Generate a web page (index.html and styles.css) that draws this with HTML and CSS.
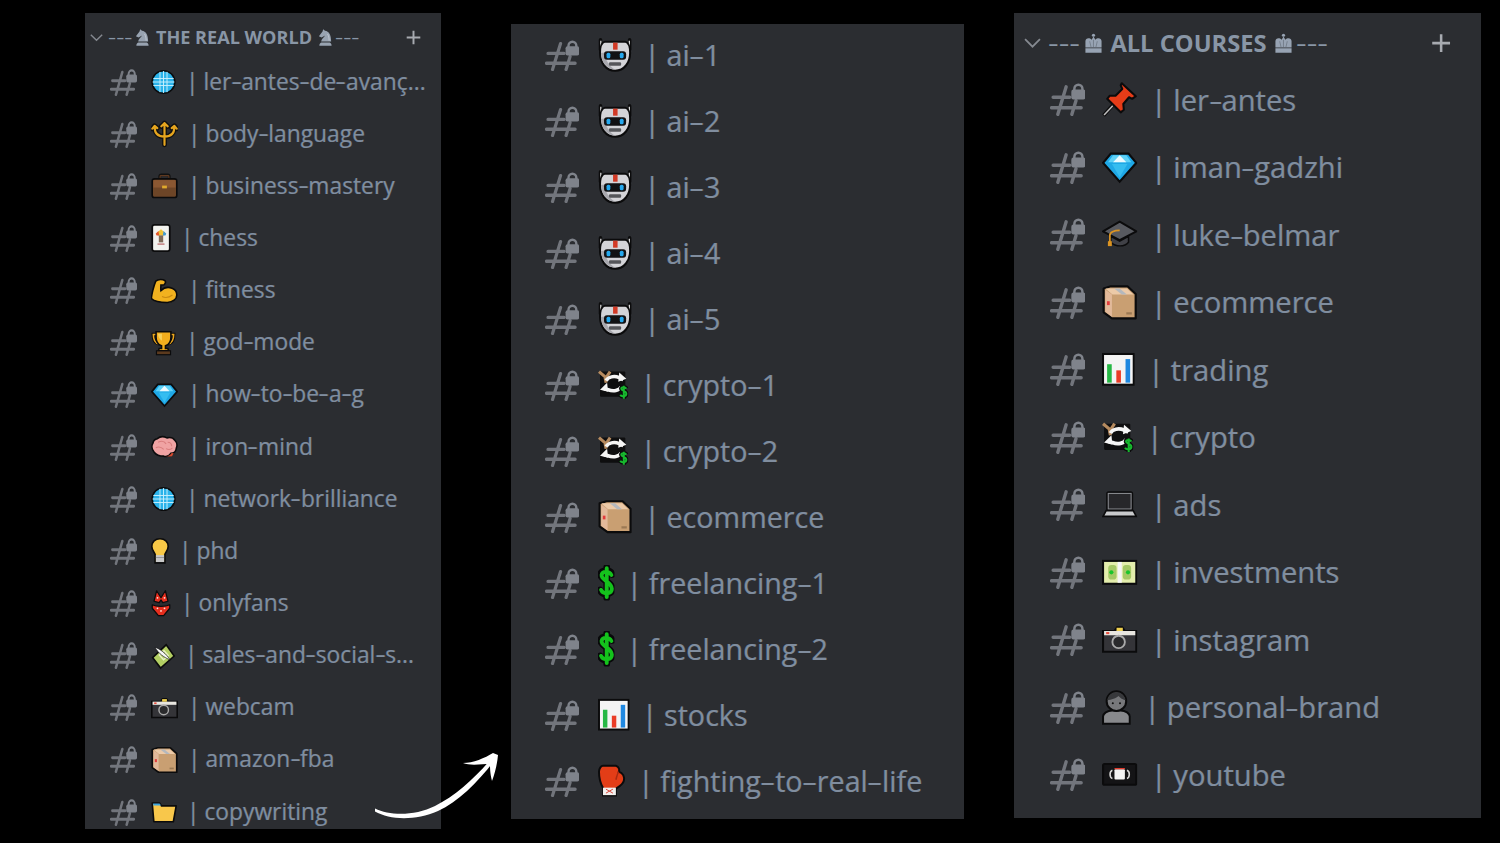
FILE: index.html
```html
<!DOCTYPE html>
<html lang="pt">
<head>
<meta charset="utf-8">
<title>Canais</title>
<link rel="stylesheet" href="styles.css">
</head>
<body>
<svg class="defs" xmlns="http://www.w3.org/2000/svg">
<symbol id="hash" viewBox="0 0 34 30" preserveAspectRatio="none"><g fill="none" stroke="#72757c" stroke-width="3.200" stroke-linecap="round"><path d="M3 13H19M1.500 22.500H30M15.500 3.500L7.500 28.500M25 16L21 28.500"/></g><rect x="20.500" y="6" width="13.500" height="9" rx="2" fill="#7f838b"/><path d="M23.400 7V5.500a3.900 3.900 0 0 1 7.800 0V7" fill="none" stroke="#7f838b" stroke-width="2.400"/></symbol>
<symbol id="chevron" viewBox="0 0 16 10"><path d="M1 1.500L8 8.500L15 1.500" fill="none" stroke="#858990" stroke-width="1.700"/></symbol>
<symbol id="plus" viewBox="0 0 20 20"><path d="M10 2V18M2 10H18" stroke="#a7aab0" stroke-width="2.300"/></symbol>
<symbol id="knight" viewBox="0 0 16 18"><path fill="#98a3b1" d="M1.500 18c0-1.800.8-3 2-3.500h9.500c1.200.5 2 1.700 2 3.500zM3.500 13.500c.3-2.800 3-4.200 4.300-6.600L4 9 1 7.500 5 2.500 5.700 0l2 1.500C12 2 14.500 6 14.500 13.500z"/><path d="M10.500 5c1.300 2 1.800 5 1.800 7.500" fill="none" stroke="#c2c9d2" stroke-width="1"/></symbol>
<symbol id="crown" viewBox="0 0 20 20"><path fill="#97a3b3" d="M1.500 14.500V8C1.500 5 5.500 3.700 8 6.500L10 3l2 3.500C14.500 3.700 18.500 5 18.500 8v6.500z"/><path fill="#97a3b3" d="M1.500 15.500h17V20h-17z"/><circle cx="10" cy="1.700" r="1.700" fill="#97a3b3"/><path d="M10 6.500v8M6 8l1.500 6.500M14 8l-1.500 6.500" fill="none" stroke="#5c6570" stroke-width=".6"/></symbol>

<symbol id="globe" viewBox="0 0 32 32"><circle cx="16" cy="16" r="14.500" fill="#2ab3ea" stroke="#0b0b0c" stroke-width="2"/><path d="M3 11.500H29M2 16H30M3 20.500H29M11.500 3V29M16 2V30M20.500 3V29" stroke="#c9f0fd" stroke-width="1.200"/></symbol>
<symbol id="trident" viewBox="1 3 30 28"><g fill="none" stroke="#111" stroke-width="5.500" stroke-linecap="round" stroke-linejoin="round"><path d="M16 5V29M5 9c0 8 5 11 11 11s11-3 11-11M12.500 8.500L16 5l3.500 3.500M2.500 11L5 8l3 2.500M24 10.500L27 8l2.500 3"/></g><g fill="none" stroke="#e6a51e" stroke-width="2.400" stroke-linecap="round" stroke-linejoin="round"><path d="M16 5V29M5 9c0 8 5 11 11 11s11-3 11-11M12.500 8.500L16 5l3.500 3.500M2.500 11L5 8l3 2.500M24 10.500L27 8l2.500 3"/></g></symbol>
<symbol id="case" viewBox="0 0 34 32"><rect x="11" y="2" width="12" height="8" rx="2" fill="none" stroke="#111" stroke-width="3.500"/><rect x="11.500" y="3" width="11" height="6" rx="1" fill="none" stroke="#5f3920" stroke-width="1.500"/><rect x="1.500" y="7" width="31" height="23.500" rx="3" fill="#6d4527" stroke="#0b0b0c" stroke-width="2"/><path d="M3 8.500h28v9.500H3z" fill="#8a5732"/><rect x="14" y="15.500" width="6" height="3.500" fill="#e0a92d"/></symbol>
<symbol id="card" viewBox="0 0 22 32"><rect x="1" y="1" width="20" height="30" rx="2.500" fill="#f2f2ee" stroke="#0b0b0c" stroke-width="2"/><path d="M5 11L11 6l6 5-3 2H8z" fill="#f0c338"/><path d="M5 11L8 8l1 5H6z" fill="#e2542d"/><path d="M17 11l-3-3-1 5h3z" fill="#3e9ad6"/><rect x="8.500" y="13" width="5" height="8" fill="#7f6a58"/><path d="M7 22h8v2H7z" fill="#c98f8f"/></symbol>
<symbol id="bicep" viewBox="0 0 34 32"><path d="M6 3.500C9 1 15 1 17.500 3c1.500 1.500.5 4-1 5-1.500.5-3 .5-4 .5 0 3-.5 5 0 7 4-4 10-4.500 14-3 4 1.500 6 5 6 8.500 0 5-5 9.500-12 9.500-8 0-17-2-20-5C.500 22 3.500 9 6 3.500z" fill="#f2b21f" stroke="#0b0b0c" stroke-width="2"/><path d="M14 23c4 2 9 1 13-2" fill="none" stroke="#c98a12" stroke-width="1.500"/></symbol>
<symbol id="trophy" viewBox="0 0 32 32"><path d="M8 5H3c0 7 2 11 7 12M24 5h5c0 7-2 11-7 12" fill="none" stroke="#0b0b0c" stroke-width="4.500"/><path d="M8 5H3c0 7 2 11 7 12M24 5h5c0 7-2 11-7 12" fill="none" stroke="#eca61d" stroke-width="2"/><path d="M6.500 1.500h19V9c0 6-4 9.500-7 10.500V23h3l1 3H9.500l1-3h3v-3.500c-3-1-7-4.500-7-10.500z" fill="#f3ae1d" stroke="#0b0b0c" stroke-width="2"/><path d="M9 4h5v9c-3-2-5-5-5-9z" fill="#f8d05a"/><rect x="7" y="26" width="18" height="5" fill="#5b3a1e" stroke="#0b0b0c" stroke-width="1.500"/></symbol>
<symbol id="gem" viewBox="0 0 32 28"><path d="M8 1.500h16L31 10 16 27 1 10z" fill="#1fa8e6" stroke="#0b0b0c" stroke-width="2"/><path d="M10 3h12l4.500 6.500h-21z" fill="#5fd2f7"/><path d="M16 3l6 6.500H10z" fill="#eafaff"/><path d="M9 11h14l-7 12z" fill="#35bdf0"/></symbol>
<symbol id="brain" viewBox="0 0 34 28"><path d="M8 3.500C12 0 17 1 20 2.500c4-1 8 0 10 3 2.500 2.500 3.500 6 2 9.500-.5 5-4 7-7 7-2 3-6 4.500-9 3.500-5 0-9-1-12-5C1 17 .5 12 2.500 9 3 6 5 4 8 3.500z" fill="#f0a3a3" stroke="#0b0b0c" stroke-width="2"/><path d="M9 8c4-2 8-1 10 2M6 15c4-2 7-1 10 2M21 8c3 0 5 2 5 5M19 16c3 2 6 1 8-1" fill="none" stroke="#d97e7e" stroke-width="1.400"/><path d="M19 26c2 0 6-2 6.500-4l3-.5-2 4z" fill="#d84a2e"/></symbol>
<symbol id="bulb" viewBox="0 0 22 32"><path d="M11 1c6 0 10 4 10 9.500 0 4-2.500 6.500-4 9.500v10.500H5V20c-1.500-3-4-5.500-4-9.500C1 5 5 1 11 1z" fill="#f8c846" stroke="#0b0b0c" stroke-width="2"/><path d="M6 21h10v8.500H6z" fill="#c8c8c8"/><path d="M6 24h10" stroke="#8d8d8d" stroke-width="1"/></symbol>
<symbol id="bikini" viewBox="0 0 22 32"><path d="M3 14L6 2l5 8 5-8 3 12-6 1.500-2-3-2 3z" fill="#e62e1e" stroke="#0b0b0c" stroke-width="1.400" stroke-linejoin="round"/><path d="M1 18c5 2.500 15 2.500 20 0v4l-7 8.500H8L1 22z" fill="#e62e1e" stroke="#0b0b0c" stroke-width="1.400" stroke-linejoin="round"/><g fill="#fbe6df"><circle cx="7" cy="10" r="1"/><circle cx="15" cy="10" r="1"/><circle cx="7" cy="22" r="1"/><circle cx="11" cy="25" r="1"/><circle cx="15" cy="22" r="1"/></g></symbol>
<symbol id="money" viewBox="0 0 30 32"><path d="M2 18L19 2l10 14-17 15z" fill="#b3cf63" stroke="#0b0b0c" stroke-width="2"/><rect x="12" y="11" width="8" height="8" transform="rotate(-42 16 15)" fill="none" stroke="#eaf2c6" stroke-width="1.700"/><path d="M5 5c6 2 14 8 19 16-7-3-15-8-19-16z" fill="#f6f6f6" stroke="#0b0b0c" stroke-width=".8"/></symbol>
<symbol id="camera" viewBox="0 0 34 26"><path d="M1 5h11l2.500-3.500h5L22 5h11v20H1z" fill="#343438" stroke="#0b0b0c" stroke-width="2"/><path d="M2 5h30v4H2z" fill="#e8e6e0"/><rect x="4" y="6" width="3" height="2" fill="#e84c3d"/><path d="M14 1.800h6V5h-6z" fill="#efd04f"/><circle cx="16" cy="15.500" r="6" fill="#2a2a2c" stroke="#a9a9a9" stroke-width="1.800"/></symbol>
<symbol id="box" viewBox="0 0 32 32"><path d="M1.500 3.500L8 1.500h15l7.500 7V30.500H9L1.500 25z" fill="#c99f72" stroke="#0b0b0c" stroke-width="2" stroke-linejoin="round"/><path d="M3 4.500L9 9V29L3 24.500z" fill="#e2b99a"/><path d="M3 3.500h19.500l6 5.500H9.500z" fill="#eccaa8"/><path d="M11 3.500L18 9h4.500L16 3.500z" fill="#b4b8bd"/><rect x="4.500" y="15" width="2.500" height="3.500" fill="#e23c3c"/><path d="M22 25h5v2h-5z" fill="#9b7954"/></symbol>
<symbol id="folder" viewBox="0 0 32 28"><path d="M1.500 3h9l2.500 3.500H31L27.500 26H3.500z" fill="#f8c74b" stroke="#0b0b0c" stroke-width="2" stroke-linejoin="round"/><path d="M2.500 3.500h8l2 2.500H3z" fill="#3ea3dc"/></symbol>
<symbol id="robot" viewBox="0 0 34 34"><path d="M2.500 2v10M31.500 2v10" stroke="#0b0b0c" stroke-width="3.500" stroke-linecap="round"/><path d="M2.800 3v9M31.200 3v9" stroke="#d8d8d8" stroke-width="1.300"/><path d="M7 4h20c4 1 5 6 5 11 0 10-6 18-15 18S2 25 2 15C2 10 3 5 7 4z" fill="#d4d4d8" stroke="#0b0b0c" stroke-width="2"/><path d="M3 15c0 8 5 16 14 17C11 28 7 22 7 15z" fill="#a8a8ae"/><rect x="15" y="5" width="4.500" height="7" fill="#d23a26"/><rect x="6" y="13.500" width="22" height="8.500" rx="3" fill="#121214"/><rect x="8.500" y="15" width="3.800" height="5.500" rx="1.500" fill="#25a8ee"/><rect x="21.700" y="15" width="3.800" height="5.500" rx="1.500" fill="#25a8ee"/><rect x="11" y="24.500" width="12" height="3.500" rx="1" fill="#55565a"/></symbol>
<symbol id="crypto" viewBox="0 0 30 32"><rect x="2" y="3" width="25" height="25" rx="1" fill="#0e0e0f"/><path d="M1 3l7 6 4-6M7 9l1 5" fill="none" stroke="#b58a5f" stroke-width="3"/><path d="M8 12c2-4 8-5 13-3l4 2" fill="none" stroke="#f5f5f5" stroke-width="3.500"/><path d="M21 4l7 6-8 3z" fill="#f5f5f5"/><path d="M23 18c-2 4-8 5-13 3l-4-1" fill="none" stroke="#f5f5f5" stroke-width="3.500"/><path d="M9 14l-7 7 8 2z" fill="#f5f5f5"/><path d="M28 20c-1-2-5-2-5 0s5 2 5 5-5 3-6 1M25.500 17v13" fill="none" stroke="#0b0b0c" stroke-width="4.500"/><path d="M28 20c-1-2-5-2-5 0s5 2 5 5-5 3-6 1M25.500 17v13" fill="none" stroke="#17b82e" stroke-width="2"/></symbol>
<symbol id="dollar" viewBox="0 0 16 34"><path d="M14 9C12 4 3 4 2.500 9 2 15 14 16 14 23c0 6-10 7-12 1M8.500 2V32" fill="none" stroke="#08090a" stroke-width="6.500" stroke-linecap="round"/><path d="M13 9.500C11 5.500 4 5.500 3.500 9.500 3 15 13.500 16 13.500 23c0 5-8.500 6-10.500 1M8.500 3V31" fill="none" stroke="#14c21c" stroke-width="3.800" stroke-linecap="round"/></symbol>
<symbol id="chart" viewBox="0 0 32 32"><rect x="1" y="1" width="30" height="30" fill="#f4f4f4" stroke="#0b0b0c" stroke-width="2"/><rect x="5" y="11" width="4.500" height="18" fill="#26b845"/><rect x="14" y="17" width="4.500" height="12" fill="#ea3c26"/><rect x="23" y="6" width="4.500" height="23" fill="#1f88e0"/></symbol>
<symbol id="glove" viewBox="0 0 28 32"><path d="M5 1h13c3 1 4 4 3 6 4 1 6 5 5 9-1 4-5 6-8 8v7H5v-8C2 18 1 13 1 7c0-3 2-6 4-6z" fill="#e33d17" stroke="#0b0b0c" stroke-width="2"/><path d="M21 7c-2 2-2 5-3 8" stroke="#a92a10" stroke-width="1.500" fill="none"/><rect x="5" y="23" width="13" height="7.500" fill="#f1f0ee"/><path d="M8 24.500l7 4M15 24.500l-7 4" stroke="#d8473a" stroke-width="1"/></symbol>
<symbol id="pin" viewBox="0 0 34 34"><path d="M1.500 32.500L11 22" stroke="#0b0b0c" stroke-width="3.500"/><path d="M2 32L11 22.500" stroke="#bdbdbd" stroke-width="1.500"/><path d="M19 1.500L32.500 14 29 16.500 26 15 20.500 21.500 21 27 18 29.500 5 16.500 7.500 13.500 13 13.500 19.500 7 18 3.500z" fill="#e63c18" stroke="#0b0b0c" stroke-width="2" stroke-linejoin="round"/></symbol>
<symbol id="cap" viewBox="0 0 36 28"><path d="M18 1L35 11 18 20 1 11z" fill="#585a60" stroke="#0b0b0c" stroke-width="2" stroke-linejoin="round"/><path d="M9 16v6c5 5 14 5 18 0v-6l-9 5z" fill="#404147" stroke="#0b0b0c" stroke-width="1.500"/><path d="M18 10c-6 0-10 2-10 5v7" fill="none" stroke="#dc9422" stroke-width="1.800"/><rect x="6" y="21" width="4" height="5" fill="#dc9422"/></symbol>
<symbol id="laptop" viewBox="0 0 34 26"><rect x="5" y="1.500" width="24" height="17" rx="1.500" fill="#27272a" stroke="#0b0b0c" stroke-width="2"/><rect x="6" y="2.500" width="22" height="15" fill="none" stroke="#8d8f94" stroke-width="1"/><path d="M1 24.500l3-5.500h26l3 5.500z" fill="#c9cacc" stroke="#0b0b0c" stroke-width="1.600"/></symbol>
<symbol id="note" viewBox="0 0 34 24"><rect x="1" y="1" width="32" height="22" fill="#e3edac" stroke="#0b0b0c" stroke-width="2"/><rect x="6" y="5" width="8" height="14" rx="3" fill="#a5c866"/><rect x="20" y="5" width="8" height="14" rx="3" fill="#a5c866"/><rect x="15" y="2" width="4" height="20" fill="#f6f6f6"/><circle cx="9" cy="12" r="2" fill="#1ac52c"/><circle cx="25" cy="12" r="2" fill="#1ac52c"/></symbol>
<symbol id="person" viewBox="0 0 28 34"><path d="M1 33V26c0-3 4-6 9-6h8c5 0 9 3 9 6v7z" fill="#88898c" stroke="#0b0b0c" stroke-width="2"/><circle cx="14" cy="11" r="9.500" fill="#77787b" stroke="#0b0b0c" stroke-width="2"/><path d="M5 10c1-5 5-8 9-8s8 3 9 8c-3 0-6-3-7-4-2 2-7 4-11 4z" fill="#37383b"/><circle cx="10.500" cy="13" r="1" fill="#111"/><circle cx="17.500" cy="13" r="1" fill="#111"/></symbol>
<symbol id="vhs" viewBox="0 0 34 22"><rect x="1" y="1" width="32" height="20" rx="1.500" fill="#141416" stroke="#0b0b0c" stroke-width="2"/><rect x="12" y="6" width="10" height="10" rx="1" fill="#f3f3f3"/><path d="M12 5.500h10" stroke="#e3382a" stroke-width="1.200"/><path d="M10 7c-3 1-3 7 0 8M24 7c3 1 3 7 0 8" fill="none" stroke="#d8d8d8" stroke-width="1.500"/></symbol>
</svg>

<main class="stage">
  <section class="panel panel-rw">
    <header class="head">
      <svg class="chev"><use href="#chevron"/></svg>
      <h2 class="title"><span class="dash">---</span><svg class="badge badge-l"><use href="#knight"/></svg><span>THE REAL WORLD</span><svg class="badge badge-r"><use href="#knight"/></svg><span class="dash">---</span></h2>
      <svg class="add"><use href="#plus"/></svg>
    </header>
    <ul class="list">
      <li class="row"><svg class="hash"><use href="#hash"/></svg><svg class="emo w25"><use href="#globe"/></svg><span class="label">| ler<span class="hy">-</span>antes<span class="hy">-</span>de<span class="hy">-</span>avanç...</span></li>
      <li class="row"><svg class="hash"><use href="#hash"/></svg><svg class="emo w27"><use href="#trident"/></svg><span class="label">| body<span class="hy">-</span>language</span></li>
      <li class="row"><svg class="hash"><use href="#hash"/></svg><svg class="emo w27"><use href="#case"/></svg><span class="label">| business<span class="hy">-</span>mastery</span></li>
      <li class="row"><svg class="hash"><use href="#hash"/></svg><svg class="emo w20"><use href="#card"/></svg><span class="label">| chess</span></li>
      <li class="row"><svg class="hash"><use href="#hash"/></svg><svg class="emo w27"><use href="#bicep"/></svg><span class="label">| fitness</span></li>
      <li class="row"><svg class="hash"><use href="#hash"/></svg><svg class="emo w25"><use href="#trophy"/></svg><span class="label">| god<span class="hy">-</span>mode</span></li>
      <li class="row"><svg class="hash"><use href="#hash"/></svg><svg class="emo w27"><use href="#gem"/></svg><span class="label">| how<span class="hy">-</span>to<span class="hy">-</span>be<span class="hy">-</span>a<span class="hy">-</span>g</span></li>
      <li class="row"><svg class="hash"><use href="#hash"/></svg><svg class="emo w27"><use href="#brain"/></svg><span class="label">| iron<span class="hy">-</span>mind</span></li>
      <li class="row"><svg class="hash"><use href="#hash"/></svg><svg class="emo w25"><use href="#globe"/></svg><span class="label">| network<span class="hy">-</span>brilliance</span></li>
      <li class="row"><svg class="hash"><use href="#hash"/></svg><svg class="emo w18"><use href="#bulb"/></svg><span class="label">| phd</span></li>
      <li class="row"><svg class="hash"><use href="#hash"/></svg><svg class="emo w20"><use href="#bikini"/></svg><span class="label">| onlyfans</span></li>
      <li class="row"><svg class="hash"><use href="#hash"/></svg><svg class="emo w24"><use href="#money"/></svg><span class="label">| sales<span class="hy">-</span>and<span class="hy">-</span>social<span class="hy">-</span>s...</span></li>
      <li class="row"><svg class="hash"><use href="#hash"/></svg><svg class="emo w27"><use href="#camera"/></svg><span class="label">| webcam</span></li>
      <li class="row"><svg class="hash"><use href="#hash"/></svg><svg class="emo w27"><use href="#box"/></svg><span class="label">| amazon<span class="hy">-</span>fba</span></li>
      <li class="row"><svg class="hash"><use href="#hash"/></svg><svg class="emo w26"><use href="#folder"/></svg><span class="label">| copywriting</span></li>
    </ul>
  </section>

  <section class="panel panel-ai">
    <ul class="list">
      <li class="row"><svg class="hash"><use href="#hash"/></svg><svg class="emo w27"><use href="#robot"/></svg><span class="label">| ai<span class="hy">-</span>1</span></li>
      <li class="row"><svg class="hash"><use href="#hash"/></svg><svg class="emo w27"><use href="#robot"/></svg><span class="label">| ai<span class="hy">-</span>2</span></li>
      <li class="row"><svg class="hash"><use href="#hash"/></svg><svg class="emo w27"><use href="#robot"/></svg><span class="label">| ai<span class="hy">-</span>3</span></li>
      <li class="row"><svg class="hash"><use href="#hash"/></svg><svg class="emo w27"><use href="#robot"/></svg><span class="label">| ai<span class="hy">-</span>4</span></li>
      <li class="row"><svg class="hash"><use href="#hash"/></svg><svg class="emo w27"><use href="#robot"/></svg><span class="label">| ai<span class="hy">-</span>5</span></li>
      <li class="row"><svg class="hash"><use href="#hash"/></svg><svg class="emo w24"><use href="#crypto"/></svg><span class="label">| crypto<span class="hy">-</span>1</span></li>
      <li class="row"><svg class="hash"><use href="#hash"/></svg><svg class="emo w24"><use href="#crypto"/></svg><span class="label">| crypto<span class="hy">-</span>2</span></li>
      <li class="row"><svg class="hash"><use href="#hash"/></svg><svg class="emo w27"><use href="#box"/></svg><span class="label">| ecommerce</span></li>
      <li class="row"><svg class="hash"><use href="#hash"/></svg><svg class="emo w13"><use href="#dollar"/></svg><span class="label">| freelancing<span class="hy">-</span>1</span></li>
      <li class="row"><svg class="hash"><use href="#hash"/></svg><svg class="emo w13"><use href="#dollar"/></svg><span class="label">| freelancing<span class="hy">-</span>2</span></li>
      <li class="row"><svg class="hash"><use href="#hash"/></svg><svg class="emo w25"><use href="#chart"/></svg><span class="label">| stocks</span></li>
      <li class="row"><svg class="hash"><use href="#hash"/></svg><svg class="emo w22"><use href="#glove"/></svg><span class="label">| fighting<span class="hy">-</span>to<span class="hy">-</span>real<span class="hy">-</span>life</span></li>
    </ul>
  </section>

  <section class="panel panel-courses">
    <header class="head">
      <svg class="chev"><use href="#chevron"/></svg>
      <h2 class="title"><span class="dash">---</span><svg class="badge badge-l"><use href="#crown"/></svg><span>ALL COURSES</span><svg class="badge badge-r"><use href="#crown"/></svg><span class="dash">---</span></h2>
      <svg class="add"><use href="#plus"/></svg>
    </header>
    <ul class="list">
      <li class="row"><svg class="hash"><use href="#hash"/></svg><svg class="emo w27"><use href="#pin"/></svg><span class="label">| ler<span class="hy">-</span>antes</span></li>
      <li class="row"><svg class="hash"><use href="#hash"/></svg><svg class="emo w27"><use href="#gem"/></svg><span class="label">| iman<span class="hy">-</span>gadzhi</span></li>
      <li class="row"><svg class="hash"><use href="#hash"/></svg><svg class="emo w27"><use href="#cap"/></svg><span class="label">| luke<span class="hy">-</span>belmar</span></li>
      <li class="row"><svg class="hash"><use href="#hash"/></svg><svg class="emo w27"><use href="#box"/></svg><span class="label">| ecommerce</span></li>
      <li class="row"><svg class="hash"><use href="#hash"/></svg><svg class="emo w25"><use href="#chart"/></svg><span class="label">| trading</span></li>
      <li class="row"><svg class="hash"><use href="#hash"/></svg><svg class="emo w24"><use href="#crypto"/></svg><span class="label">| crypto</span></li>
      <li class="row"><svg class="hash"><use href="#hash"/></svg><svg class="emo w27"><use href="#laptop"/></svg><span class="label">| ads</span></li>
      <li class="row"><svg class="hash"><use href="#hash"/></svg><svg class="emo w27"><use href="#note"/></svg><span class="label">| investments</span></li>
      <li class="row"><svg class="hash"><use href="#hash"/></svg><svg class="emo w27"><use href="#camera"/></svg><span class="label">| instagram</span></li>
      <li class="row"><svg class="hash"><use href="#hash"/></svg><svg class="emo w22"><use href="#person"/></svg><span class="label">| personal<span class="hy">-</span>brand</span></li>
      <li class="row"><svg class="hash"><use href="#hash"/></svg><svg class="emo w27"><use href="#vhs"/></svg><span class="label">| youtube</span></li>
    </ul>
  </section>

  <svg class="arrow" viewBox="0 0 160 100"><path fill="#fff" d="M15 68.500C30 76 55 76 75 66 95 56 115 38 131 19L134 21C118 42 98 62 78 71 55 81 30 80 15 71.500ZM103 23C113 23 125 18 133 13L138 15C137 25 135 33 132 41 130 33 130 27 130 24 122 24 110 26 103 23Z"/></svg>
</main>
</body>
</html>
```
FILE: styles.css
```css
* { box-sizing: border-box; margin: 0; padding: 0; }
html, body { background: #000; height: 843px; overflow: hidden; }
body { font-family: "Open Sans", "Noto Sans", sans-serif; }
.defs { display: none; }

.stage {
  position: relative;
  display: flex;
  align-items: flex-start;
  width: 1500px;
  height: 843px;
  padding-left: 85px;
}

.panel { background: #2b2d31; overflow: hidden; flex: none; }

.panel-rw {
  --u: 1px; --row: 52.15px; --pad: 25px; --gap: 14px; --fs: 22.800px; --hash-h: 27px;
  --emr: 10px; --lift: 2px; --hx: 2.500px; --hs: 1.450;
  width: 356px; height: 816px; margin-top: 13px;
}
.panel-ai {
  --u: 1.265px; --row: 66px; --pad: 34px; --gap: 19px; --fs: 28.700px; --hash-h: 31px;
  --emr: 12px; --lift: 2px; --hx: 5px; --hs: 1.700;
  width: 453px; height: 795px; margin-top: 24px; margin-left: 70px;
}
.panel-courses {
  --u: 1.31px; --row: 67.5px; --pad: 36px; --gap: 17px; --fs: 29.200px; --hash-h: 33px;
  --emr: 13px; --lift: 0px; --hx: 3px; --hs: 1.450;
  width: 467px; height: 805px; margin-top: 13px; margin-left: 50px;
}

.head { display: flex; align-items: center; }
.panel-rw .head { height: 48px; padding: 0 19px 0 5px; }
.panel-courses .head { height: 60px; padding: 0 29px 0 10px; }
.panel-rw .list { margin-top: -5px; }
.panel-ai .list { margin-top: -2px; }
.panel-courses .list { margin-top: -7px; }

.chev { width: calc(13 * var(--u)); height: calc(9 * var(--u)); flex: none; }
.title {
  flex: 1;
  display: flex;
  align-items: center;
  margin-left: calc(5 * var(--u));
  font-size: calc(18.100 * var(--u));
  font-weight: 700;
  color: #8996a6;
  white-space: nowrap;
}
.dash {
  font-weight: 400;
  transform: scaleX(1.400);
  transform-origin: left center;
  margin-right: calc(7 * var(--u));
}
.badge { width: calc(14.500 * var(--u)); height: calc(17 * var(--u)); flex: none; }
.badge-l { margin: 0 calc(6 * var(--u)) 0 calc(3 * var(--u)); }
.badge-r { margin: 0 calc(2 * var(--u)) 0 calc(6 * var(--u)); }
.add { width: calc(17 * var(--u)); height: calc(17 * var(--u)); flex: none; }

.list { list-style: none; }
.row {
  display: flex;
  align-items: center;
  height: var(--row);
  padding-left: var(--pad);
}
.hash { width: calc(27 * var(--u)); height: var(--hash-h); flex: none; }
.emo { height: calc(28 * var(--u)); flex: none; margin-left: var(--gap); margin-right: var(--emr); }
.w13 { width: calc(13 * var(--u)); }
.w18 { width: calc(18 * var(--u)); }
.w20 { width: calc(20 * var(--u)); }
.w22 { width: calc(22 * var(--u)); }
.w24 { width: calc(24 * var(--u)); }
.w25 { width: calc(25 * var(--u)); }
.w26 { width: calc(26 * var(--u)); }
.w27 { width: calc(27 * var(--u)); }

.label {
  margin-bottom: var(--lift);
  font-size: var(--fs);
  font-weight: 500;
  color: #808d9e;
  white-space: nowrap;
  word-spacing: -1px;
  text-shadow: -.5px 0 rgba(70, 120, 180, .45), .5px 0 rgba(150, 115, 90, .35);
}
.hy {
  display: inline-block;
  margin: 0 calc(var(--hx) / 2);
  transform: scaleX(var(--hs));
}

.arrow { position: absolute; left: 360px; top: 740px; width: 160px; height: 100px; }
```
